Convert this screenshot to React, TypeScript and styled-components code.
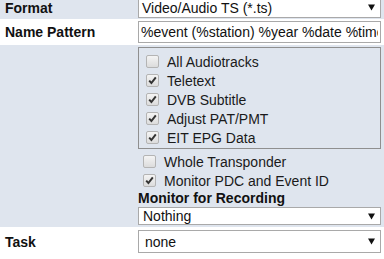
import React from "react";
import styled, { createGlobalStyle } from "styled-components";

const Global = createGlobalStyle`
  html, body { margin: 0; padding: 0; background: #fff; }
  body { font-family: "Liberation Sans", Arial, sans-serif; font-size: 14px; color: #111; overflow: hidden; }
`;

const Page = styled.div`
  margin-top: -5px;
  width: 384px;
`;

const Row = styled.div<{ $alt?: boolean; $pt: number; $pb: number }>`
  display: grid;
  grid-template-columns: 138px 1fr;
  align-items: center;
  background: ${(p) => (p.$alt ? "#dfe5ee" : "#ffffff")};
  padding: ${(p) => p.$pt}px 3px ${(p) => p.$pb}px 0;
`;

const RowTop = styled(Row)`
  align-items: start;
`;

const Label = styled.div`
  font-weight: bold;
  padding-left: 5px;
  line-height: 16px;
  color: #111;
`;

const SelectBox = styled.div<{ $h: number; $pl: number }>`
  display: flex;
  align-items: center;
  justify-content: space-between;
  height: ${(p) => p.$h}px;
  box-sizing: border-box;
  border: 1px solid #a9a9a9;
  background: #fff;
  padding: 0 4px 0 ${(p) => p.$pl}px;
  color: #111;
  line-height: 16px;
`;

const Arrow = styled.svg`
  width: 7px;
  height: 7px;
  flex: none;
  margin-right: 1px;
`;

const TextInput = styled.input`
  display: block;
  width: 100%;
  height: 22px;
  box-sizing: border-box;
  border: 1px solid #a9a9a9;
  padding: 0 2px;
  margin: 0;
  font-family: "Liberation Sans", Arial, sans-serif;
  font-size: 14px;
  color: #111;
  background: #fff;
  outline: none;
`;

const Options = styled.div`
  display: flex;
  flex-direction: column;
`;

const Fieldset = styled.div`
  border: 1px solid #8f8f8f;
  padding: 4px 0 1px 7px;
  margin-bottom: 3px;
  display: flex;
  flex-direction: column;
`;

const Check = styled.label<{ $gap: number }>`
  display: flex;
  align-items: center;
  height: 19px;
  gap: ${(p) => p.$gap}px;
  color: #1a1a1a;
  white-space: nowrap;
`;

const Outer = styled.div`
  display: flex;
  flex-direction: column;
  padding-left: 5px;
`;

const Box = styled.span`
  width: 11px;
  height: 11px;
  flex: none;
  border: 1px solid #b4b4b4;
  border-radius: 2px;
  background: linear-gradient(#f4f4f4, #dcdcdc);
  display: flex;
  align-items: center;
  justify-content: center;
`;

const SubLabel = styled.div`
  font-weight: bold;
  line-height: 16px;
  color: #111;
`;

const Spacer = styled.div`
  height: 1px;
`;

function CheckBox({ checked }: { checked: boolean }) {
  return (
    <Box>
      {checked && (
        <svg width="9" height="9" viewBox="0 0 9 9">
          <path d="M1.2 4.6 L3.4 7 L7.8 1.4" fill="none" stroke="#333" strokeWidth="2" />
        </svg>
      )}
    </Box>
  );
}

function Select({ text, h, pl }: { text: string; h: number; pl: number }) {
  return (
    <SelectBox $h={h} $pl={pl}>
      <span>{text}</span>
      <Arrow viewBox="0 0 7 7">
        <path d="M0 0.5 H7 L3.5 6.5 Z" fill="#111" />
      </Arrow>
    </SelectBox>
  );
}

const inner = [
  { t: "All Audiotracks", c: false },
  { t: "Teletext", c: true },
  { t: "DVB Subtitle", c: true },
  { t: "Adjust PAT/PMT", c: true },
  { t: "EIT EPG Data", c: true },
];

export default function App() {
  return (
    <>
      <Global />
      <Page>
        <Row $alt $pt={2} $pb={1}>
          <Label>Format</Label>
          <Select text="Video/Audio TS (*.ts)" h={21} pl={3} />
        </Row>
        <Row $pt={2} $pb={2}>
          <Label>Name Pattern</Label>
          <TextInput readOnly value="%event (%station) %year %date %time" />
        </Row>
        <RowTop $alt $pt={2} $pb={2}>
          <div />
          <Options>
            <Fieldset>
              {inner.map((o) => (
                <Check key={o.t} $gap={8}>
                  <CheckBox checked={o.c} />
                  {o.t}
                </Check>
              ))}
            </Fieldset>
            <Outer>
              <Check $gap={8}>
                <CheckBox checked={false} />
                Whole Transponder
              </Check>
              <Check $gap={8}>
                <CheckBox checked />
                Monitor PDC and Event ID
              </Check>
            </Outer>
            <SubLabel>Monitor for Recording</SubLabel>
            <Spacer />
            <Select text="Nothing" h={18} pl={4} />
          </Options>
        </RowTop>
        <Row $pt={3} $pb={3}>
          <Label>Task</Label>
          <Select text="none" h={23} pl={6} />
        </Row>
      </Page>
    </>
  );
}
